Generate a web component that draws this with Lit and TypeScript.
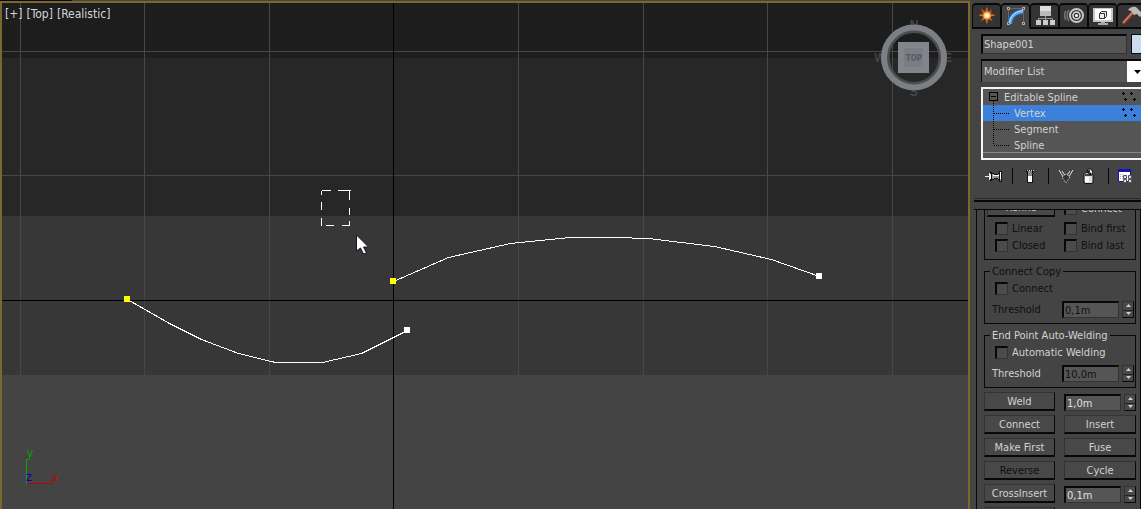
import { LitElement, html, svg, css } from "lit";
import { customElement, property } from "lit/decorators.js";

const FONT = css`11px/16px "DejaVu Sans Condensed", Tahoma, "DejaVu Sans", sans-serif`;

@customElement("view-port")
class ViewPort extends LitElement {
  static styles = css`
    :host { display: block; position: relative; overflow: hidden; min-width: 0;
      border: 2px solid #7c682d; border-bottom: 0; background: #444; font: ${FONT}; }
    .scene { display: block; width: 100%; height: 100%; }
    .menu { position: absolute; left: 3px; top: 3px; display: flex; gap: 4px; font-size: 12px; }
    .menu button { font: inherit; color: #d6d6d6; background: none; border: 0; padding: 0; }
    .cube { position: absolute; right: 14px; top: 12px; width: 80px; height: 84px; }
    .cube text { font: bold 12px "Liberation Sans", sans-serif; fill: #43454b; text-anchor: middle; }
    .cube .face { font: bold 8px "DejaVu Sans Condensed", sans-serif; fill: #565960; }
    .axis { font: 12px "Liberation Sans", sans-serif; }
  `;
  render() {
    const columns = [18, 142, 267, 516, 641, 765, 890];
    return html`
      <svg class="scene" viewBox="0 0 966 506" preserveAspectRatio="xMinYMin slice" shape-rendering="crispEdges">
        <rect width="966" height="55" fill="#1d1d1d" />
        <rect y="55" width="966" height="158" fill="#272727" />
        <rect y="213" width="966" height="159" fill="#373737" />
        <rect y="372" width="966" height="134" fill="#444" />
        ${columns.map((x) => svg`<rect x=${x} width="1" height="372" fill="#474747" />`)}
        ${[48, 172].map((y) => svg`<rect y=${y} width="966" height="1" fill="#474747" />`)}
        <rect x="391" width="1" height="506" fill="#000" />
        <rect y="297" width="966" height="1" fill="#000" />
        <g fill="none" stroke="#fff">
          <path d="M125.500 296.500L167.500 320.500L199.500 336.500L236.500 350.500L273.500 359.500H320.500L359.500 350.500L405.500 327.500" />
          <path d="M391.500 278.500L446.500 254.500L508.500 240.500L568.500 234.500H612.500L646.500 235.500L712.500 243.500L769.500 256.500L817.500 273.500" />
          <path d="M319.500 187.500h9m7 0h13M347.500 188v9m0 8v7m0 6v5M319.500 188v4m0 7v8m0 8v8M324 222.500h8m8 0h8" />
        </g>
        <rect x="122" y="293" width="6" height="6" fill="#ff0" />
        <rect x="388" y="275" width="6" height="6" fill="#ff0" />
        <rect x="402" y="324" width="6" height="6" fill="#fff" />
        <rect x="814" y="270" width="6" height="6" fill="#fff" />
        <path d="M354.500 232v16l4-3 3 6 3-1-3-6h5z" fill="#fff" stroke="#15152c" shape-rendering="auto" />
        <rect x="24" y="456" width="1" height="25" fill="#0a0" />
        <rect x="25" y="480" width="26" height="1" fill="#c00000" />
        <g class="axis">
          <text x="25" y="454" fill="#0a9a0a">y</text>
          <text x="24" y="478" fill="#0000d0">z</text>
          <text x="50" y="479" fill="#c00000">x</text>
        </g>
      </svg>
      <nav class="menu"><button>[+]</button><button>[Top]</button><button>[Realistic]</button></nav>
      <svg class="cube" viewBox="0 0 80 84" role="img" aria-label="View orientation">
        <text x="40" y="14">N</text><text x="40" y="81">S</text>
        <text x="6" y="47">W</text><text x="74" y="47">E</text>
        <circle cx="40" cy="42.500" r="26" fill="none" stroke="#4b4d50" stroke-width="3" />
        <circle cx="40" cy="42.500" r="30" fill="none" stroke="#7c7f84" stroke-width="6" />
        <rect x="24" y="27" width="31" height="31" fill="#82858c" />
        <rect x="30" y="33" width="19" height="19" fill="#7a7d84" />
        <text class="face" x="40" y="46">TOP</text>
      </svg>`;
  }
}

@customElement("spin-field")
class SpinField extends LitElement {
  @property() value = "";
  @property() label = "";
  @property({ type: Boolean }) off = false;
  static styles = css`
    :host { display: grid; grid-template-columns: minmax(0, 1fr) 12px; gap: 3px; height: 17px; }
    input { box-sizing: border-box; min-width: 0; width: 100%; height: 17px; font: ${FONT}; line-height: 14px; color: #e0e0e0;
      background: #555; border: 1px solid #333; border-top: 2px solid #080808; border-left: 2px solid #080808;
      border-radius: 0; padding: 0 1px; outline: 0; }
    input.off { color: #111; }
    .arrows { box-sizing: border-box; height: 17px; display: grid; grid-template-rows: 1fr 1fr; border: 1px solid #333; border-right-color: #080808; border-bottom-color: #080808; }
    button { padding: 0; border: 0; background: #494949; display: flex; align-items: center; justify-content: center; }
    button + button { border-top: 1px solid #222; }
    svg { width: 5px; height: 3px; fill: #d0d0d0; }
  `;
  render() {
    return html`<input class=${this.off ? "off" : ""} .value=${this.value} aria-label=${this.label} />
      <span class="arrows">
        <button aria-label="Increase"><svg viewBox="0 0 5 3"><path d="M2.500 0L5 3H0z" /></svg></button>
        <button aria-label="Decrease"><svg viewBox="0 0 5 3"><path d="M0 0h5L2.500 3z" /></svg></button>
      </span>`;
  }
}

@customElement("spline-rollout")
class SplineRollout extends LitElement {
  static styles = css`
    :host { display: block; overflow: hidden; border-left: 1px solid #080808; border-right: 1px solid #080808; color: #d2d2d2; font: ${FONT}; }
    .inner { margin: -19px 4px 0 7px; }
    .groups { display: grid; gap: 11px; }
    .group { position: relative; border: 1px solid #080808; padding: 8px 1px 5px 7px; }
    .scrolled { padding-top: 6px; }
    .title { position: absolute; left: 5px; top: -8px; padding: 0 2px; background: #444; white-space: nowrap; line-height: 16px; }
    .two { display: grid; grid-template-columns: 69px 1fr; }
    .first { grid-template-columns: 68px 1fr; column-gap: 6px; align-items: end; margin: 0 0 3px -5px; }
    .tick { display: flex; align-items: center; height: 17px; gap: 4px; padding-left: 3px; white-space: nowrap; line-height: 18px; }
    .tick input { appearance: none; box-sizing: border-box; margin: 0; width: 13px; height: 13px; flex: none;
      background: #4b4b4b; border: 1px solid #333; border-top: 2px solid #080808; border-left: 2px solid #080808; border-radius: 0; }
    .line { display: grid; grid-template-columns: 70px minmax(0, 1fr); margin-top: 4px; height: 17px; line-height: 18px; }
    .dim { color: #0f0f0f; }
    .push { box-sizing: border-box; height: 19px; font: inherit; color: #d2d2d2; line-height: 14px; background: #484848; border: 1px solid #333;
      border-right-color: #080808; border-bottom: 2px solid #080808; border-radius: 0; padding: 2px 0 0; white-space: nowrap; }
    .push.dim { color: #0f0f0f; }
    .grid { display: grid; grid-template-columns: 71px 72px; grid-auto-rows: 19px; column-gap: 9px; row-gap: 4px; margin-top: 4px; }
    .field { margin-top: 2px; }
  `;

  tick(label: string, dim = true) {
    return html`<label class="tick ${dim ? "dim" : ""}"><input type="checkbox" />${label}</label>`;
  }
  push(label: string, dim = false) {
    return html`<button class="push ${dim ? "dim" : ""}" ?disabled=${dim}>${label}</button>`;
  }
  field(label: string, value: string) {
    return html`<spin-field class="field" label=${label} value=${value}></spin-field>`;
  }

  render() {
    return html`<div class="inner">
      <div class="groups">
        <section class="group scrolled">
          <div class="two first">${this.push("Refine")}${this.tick("Connect", false)}</div>
          <div class="two">${this.tick("Linear")}${this.tick("Bind first")}${this.tick("Closed")}${this.tick("Bind last")}</div>
        </section>
        <section class="group dim">
          <span class="title">Connect Copy</span>
          ${this.tick("Connect")}
          <div class="line"><span>Threshold</span><spin-field off label="Copy threshold" value="0,1m"></spin-field></div>
        </section>
        <section class="group">
          <span class="title">End Point Auto-Welding</span>
          ${this.tick("Automatic Welding", false)}
          <div class="line"><span>Threshold</span><spin-field off label="Welding threshold" value="10,0m"></spin-field></div>
        </section>
      </div>
      <div class="grid">
        ${this.push("Weld")}${this.field("Weld distance", "1,0m")}
        ${this.push("Connect")}${this.push("Insert")}
        ${this.push("Make First")}${this.push("Fuse")}
        ${this.push("Reverse", true)}${this.push("Cycle")}
        ${this.push("CrossInsert")}${this.field("Cross insert distance", "0,1m")}
        ${this.push("")}${this.field("Distance", "")}
      </div>
    </div>`;
  }
}

const star = svg`<path d="M10 0l1 6 4-4-2 5 6 2-6 2 3 5-5-3-1 6-2-6-5 3 3-5-5-2 5-2-3-5 5 3z" fill="#a8441c"/><path d="M10 2v15M3 9.500h14M5.500 5l9 9M14.500 5l-9 9" stroke="#e8742c"/><circle cx="10" cy="9.500" r="4" fill="#f09030"/><circle cx="10" cy="9.500" r="3" fill="#ffd76a"/><circle cx="10" cy="9.500" r="1.800" fill="#fff"/>`;
const arc = svg`<path d="M2.500 18V2.500h15V18" fill="none" stroke="#666"/><path d="M4 18C4 11 9 6 17 5.500" fill="none" stroke="#2468b4" stroke-width="5"/><path d="M4 18C4 11 9 6 17 5.500" fill="none" stroke="#5cacec" stroke-width="3"/><path d="M3.500 18C3.500 10.500 9 5 17 4.700" fill="none" stroke="#c4e6ff"/><path d="M1 1h3v3H1zM16 1h3v3h-3zM16 16h3v3h-3zM1 16h3v3H1z" fill="#aaa"/><path d="M2 2h1v1H2zM17 2h1v1h-1zM17 17h1v1h-1zM2 17h1v1H2z" fill="#333"/>`;
const tree = svg`<path d="M5 0h11v10H5z" fill="#ddd"/><path d="M5 5h11v5H5z" fill="#bbb"/><path d="M10.500 10v5M3.500 15v-2.500h14V15" fill="none" stroke="#999"/><path d="M1 14h5v5H1zM8 14h5v5H8zM15 14h5v5h-5z" fill="#ccc"/>`;
const wheel = svg`<g fill="none"><path d="M2 5Q-1 9.500 2 14M5 4Q1 9.500 5 15" stroke="#777" stroke-width="1.500"/><circle cx="12.500" cy="9.500" r="6.500" stroke="#c8c8c8" stroke-width="2"/><circle cx="12.500" cy="9.500" r="3.500" stroke="#ddd" stroke-width="1.500"/></g><circle cx="12.500" cy="9.500" r="1.500" fill="#fff"/>`;
const screen = svg`<path d="M0 2h20v14H0z" fill="#c8c8c8"/><path d="M2 3h16v11H2z" fill="#fff"/><path d="M6.500 7.500l2-2h5v5l-2 2h-5zM7 7.500h4.500v5" fill="#eee" stroke="#333"/><path d="M8 16h4v1h3v2H5v-2h3z" fill="#aaa"/>`;
const hammer = svg`<path d="M11 7L1 18" stroke="#792c25" stroke-width="4"/><path d="M11 6L1 17" stroke="#d07468" stroke-width="2"/><path d="M6 4q3-4 8-3l7 7-3 3-3-3-3 1-3-4z" fill="#b9b9b9"/>`;

@customElement("command-panel")
class CommandPanel extends LitElement {
  static styles = css`
    :host { display: flex; flex-direction: column; overflow: hidden; background: #444; color: #d2d2d2; font: ${FONT}; }
    button, input, select { font: inherit; color: inherit; border-radius: 0; box-sizing: border-box; outline: 0; }
    .tabs { display: grid; grid-template-columns: repeat(6, 29px); height: 25px; padding: 3px 0 0 2px; flex: none; }
    .tab { background: #333; border: 1px solid #080808; border-top-width: 2px; border-bottom: 2px solid #080808;
      border-radius: 4px 4px 0 0; padding: 0; height: 26px; display: flex; justify-content: center; align-items: center; }
    .tab.on { background: #444; border-bottom-color: #444; }
    .tab svg { width: 20px; height: 20px; flex: none; }
    .top { display: grid; grid-template-columns: 146px 16px; gap: 4px; padding: 6px 0 0 11px; }
    .name { height: 20px; width: 100%; background: #555; border: 1px solid #333; border-top: 2px solid #080808; border-left: 2px solid #080808; padding: 0 1px; }
    .swatch { height: 20px; background: #cbdcf2; border: 1px solid #080808; padding: 0; }
    .pick { position: relative; margin: 5px 0 0 11px; height: 23px; width: 164px; flex: none; }
    select { appearance: none; width: 100%; height: 23px; background: #555; border: 0; border-top: 2px solid #080808; border-left: 1px solid #080808; padding: 0 2px; }
    .drop { position: absolute; right: 0; top: 2px; width: 18px; height: 21px; background: #fff; pointer-events: none; }
    .stack { margin: 5px 0 0 11px; padding: 0; list-style: none; width: 170px; height: 69px; flex: none; border: 2px solid #f4f4f4; background: #555; line-height: 18px; }
    .item { position: relative; display: flex; height: 16px; padding-left: 31px; }
    .item.root { padding-left: 21px; }
    .item.on { background: #3b80db; }
    .item:last-child { border-bottom: 1px solid #888; height: 15px; }
    .twig { position: absolute; left: 5px; top: 0; width: 24px; height: 16px; }
    .dots { position: absolute; left: 138px; top: 2px; width: 16px; height: 12px; }
    .tools { display: flex; align-items: center; height: 20px; padding: 6px 0 0 15px; flex: none; }
    .tools button { border: 0; background: none; padding: 0; height: 18px; display: flex; align-items: center; }
    .tools svg { width: 18px; height: 18px; flex: none; }
    .tools .pin { width: 27px; }
    .tools .tube { width: 35px; padding-left: 8px; }
    .tools .fork { width: 32px; padding-left: 8px; }
    .tools .bin { width: 27px; padding-left: 1px; }
    .tools .set { padding-left: 8px; }
    .bar { border-left: 1px solid #080808; height: 16px; width: 0; }
    .rule { margin: 12px 0 0 4px; height: 1px; flex: none; background: #2a2a2a; }
    .edge { margin: 1px 0 0 4px; height: 7px; flex: none; border-top: 2px solid #080808; border-bottom: 1px solid #080808; }
    spline-rollout { flex: 1; min-height: 0; margin-left: 6px; width: 163px; }
  `;

  render() {
    const tabs: [string, unknown][] = [["Create", star], ["Modify", arc], ["Hierarchy", tree], ["Motion", wheel], ["Display", screen], ["Utilities", hammer]];
    const dots = html`<svg class="dots" viewBox="0 0 16 12" shape-rendering="crispEdges"><path d="M1 2.500h3M2.500 1v3M9 2.500h3M10.500 1v3M3 8.500h3M4.500 7v3M12 8.500h3M13.500 7v3" stroke="#000" /></svg>`;
    const twig = (last: boolean) => html`<svg class="twig" viewBox="0 0 24 16" shape-rendering="crispEdges"><path d="M5.500 0V${last ? 8 : 16}M6 8.500h16" stroke="#000" stroke-dasharray="1 1" /></svg>`;
    return html`
      <nav class="tabs">${tabs.map(([name, art], i) => html`<button class="tab ${i === 1 ? "on" : ""}" aria-label=${name}><svg viewBox="0 0 20 20">${art}</svg></button>`)}</nav>
      <div class="top"><input class="name" aria-label="Object name" value="Shape001" /><button class="swatch" aria-label="Object color"></button></div>
      <div class="pick"><select aria-label="Modifier"><option>Modifier List</option></select>
        <svg class="drop" viewBox="0 0 18 21"><path d="M7 9h7l-3.500 4z" /></svg></div>
      <ul class="stack">
        <li class="item root"><svg class="twig" viewBox="0 0 24 16" shape-rendering="crispEdges"><path d="M1.500 3.500h8v8h-8zM3 7.500h5" fill="none" stroke="#000" /><path d="M5.500 12v4" stroke="#000" stroke-dasharray="1 1" /></svg>Editable Spline${dots}</li>
        <li class="item on">${twig(false)}Vertex${dots}</li>
        <li class="item">${twig(false)}Segment</li>
        <li class="item">${twig(true)}Spline</li>
      </ul>
      <div class="tools">
        <button class="pin" aria-label="Pin stack"><svg viewBox="0 0 18 18" shape-rendering="crispEdges"><path d="M0 9h5v1H0zM4 6h1v7H4z" fill="#eee" /><path d="M5 5h2v9H5zM7 6h2v1h4V6h1V4h3v11h-3v-2h-1v-1H9v1H7z" fill="#111" /><path d="M7 7h2v1h4V7h1v5h-1v-1H9v1H7zM15 5h1v9h-1z" fill="#999" /><path d="M5 7h1v5H5zM8 8h6v1H8zM15 5h1v7h-1z" fill="#fff" /></svg></button>
        <i class="bar"></i>
        <button class="tube" aria-label="Show end result"><svg viewBox="0 0 18 18" shape-rendering="crispEdges"><path d="M5 3h8v2h-1v11H6V5H5z" fill="#111" /><path d="M6 3h1v1H6zM8 3h1v1H8zM10 3h1v1h-1zM12 3h1v1h-1z" fill="#ddd" /><path d="M7 4h4v5H7z" fill="#888" /><path d="M7 9h4v6H7z" fill="#fff" /></svg></button>
        <i class="bar"></i>
        <button class="fork" aria-label="Make unique"><svg viewBox="0 0 18 18"><path d="M2 3l6 10M5 4l4 6 4-6M16 3l-6 10" fill="none" stroke="#e0e0e0" /><path d="M5 10l4-3 4 3-4 6z" fill="#333" stroke="#ddd" stroke-dasharray="1 1" /></svg></button>
        <button class="bin" aria-label="Remove modifier"><svg viewBox="0 0 18 18"><path d="M2 7l3-2 1-3h3l2 3-1 2 1 1v7l-1 1.500H3L2 15z" fill="#ddd" stroke="#111" /><path d="M3 8h7M5 5l4 2M6 4h2" stroke="#111" stroke-width="1.500" /><path d="M3 10h4v5H3z" fill="#fff" /></svg></button>
        <i class="bar"></i>
        <button class="set" aria-label="Configure sets"><svg viewBox="0 0 18 18"><path d="M1.500 2.500h12v12h-12z" fill="#fff" stroke="#1717aa" /><path d="M1 2h13v3H1z" fill="#1515b4" /><path d="M3 7.500h4M3 9.500h4M3 11.500h4" stroke="#aaa" stroke-dasharray="1 1" /><path d="M6.500 8.500h3v3h-3zM11.500 8.500h3v3h-3zM6.500 12.500h3v3h-3zM11.500 12.500h3v3h-3z" fill="#ddd" stroke="#555" /></svg></button>
      </div>
      <div class="rule"></div>
      <div class="edge"></div>
      <spline-rollout></spline-rollout>`;
  }
}

@customElement("app-root")
class AppRoot extends LitElement {
  static styles = css`
    :host { display: grid; grid-template-columns: minmax(0, 1fr) 171px; height: 100vh; overflow: hidden;
      background: linear-gradient(#080808, #080808) 0 0 / 72px 1px no-repeat #444; }
    view-port { margin-top: 1px; }
    command-panel { min-height: 0; }
  `;
  render() {
    return html`<view-port></view-port><command-panel></command-panel>`;
  }
}
